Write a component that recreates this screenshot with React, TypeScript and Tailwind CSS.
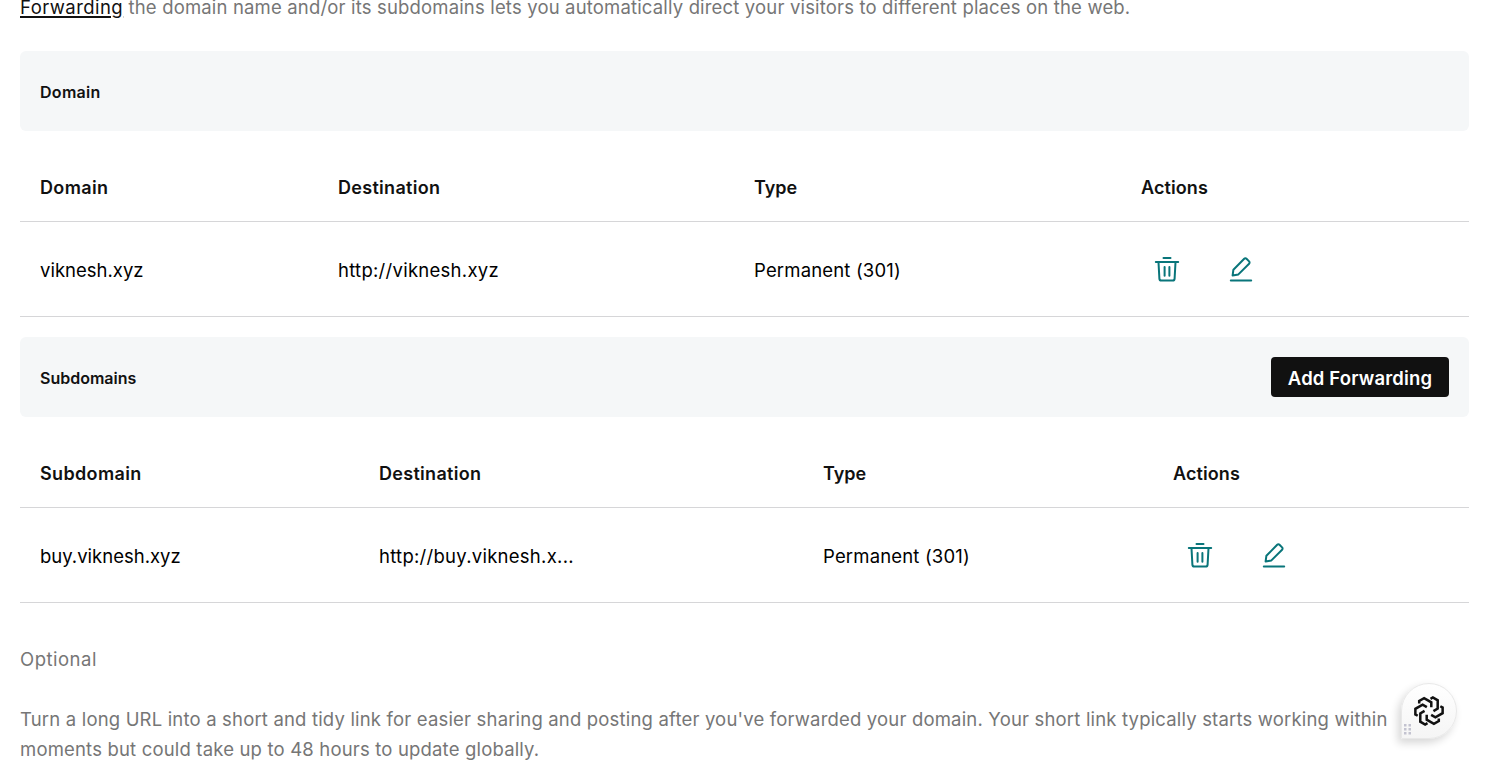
import React from 'react';

type Row = { name: string; destination: string; type: string };

const swirlArms = [0, 60, 120, 180, 240, 300];

function TrashIcon() {
  return (
    <svg viewBox="0 0 26 28" className="h-7 w-[26px]" fill="none" stroke="#09757a" strokeWidth="2" strokeLinecap="round" strokeLinejoin="round">
      <path d="M9.5 3h7M1.8 7h22.4M4.5 7.2l.9 16.4a2 2 0 0 0 2 1.9h11.2a2 2 0 0 0 2-1.9l.9-16.4M10.6 12v8.8M15.4 12v8.8" />
    </svg>
  );
}

function EditIcon() {
  return (
    <svg viewBox="0 0 26 28" className="h-7 w-[26px]" fill="none" stroke="#09757a" strokeWidth="2" strokeLinecap="round" strokeLinejoin="round">
      <path d="M2.8 25.5h20.4M4.6 20.6l.8-5.9L16.2 3.8a1.6 1.6 0 0 1 2.3 0l2.6 2.6a1.6 1.6 0 0 1 0 2.3L10.4 19.4z" />
    </svg>
  );
}

function ForwardingTable({ first, columns, actionsInset, row }: { first: string; columns: string; actionsInset: string; row: Row }) {
  return (
    <div>
      <div className={`grid h-[71px] items-center border-b border-[#d6d6d8] pt-[3px] font-semibold text-[18px] ${columns}`}>
        <span className="tracking-[0.35px]">{first}</span>
        <span className="tracking-[0.3px]">Destination</span>
        <span>Type</span>
        <span className="tracking-[0.1px]">Actions</span>
      </div>
      <div className={`grid h-[95px] items-center border-b border-[#d6d6d8] pt-[3px] text-[18.5px] text-black ${columns}`}>
        <span>{row.name}</span>
        <span className="tracking-[0.27px]">{row.destination}</span>
        <span className="tracking-[0.17px]">{row.type}</span>
        <span className={`-mt-[3px] flex gap-12 ${actionsInset}`}>
          <TrashIcon />
          <EditIcon />
        </span>
      </div>
    </div>
  );
}

export default function App() {
  return (
    <main className="relative h-[782px] w-[1488px] overflow-hidden bg-white px-5 pr-[19px] font-['Inter',sans-serif] text-[#111]">
      <p className="-mt-[8px] h-[59px] whitespace-nowrap text-[18.5px] leading-[30px] tracking-[0.165px] text-[#767676]">
        <a className="tracking-[0.45px] text-[#111] underline decoration-2 underline-offset-2">Forwarding</a> the domain name and/or its subdomains lets you automatically direct your visitors to different places on the web.
      </p>
      <div className="flex h-20 items-center rounded-md bg-[#f5f7f8] px-5 pt-[2px] text-base font-semibold tracking-[0.3px]">Domain</div>
      <div className="h-5" />
      <ForwardingTable
        first="Domain"
        columns="grid-cols-[298px_416px_387px_1fr] pl-5"
        actionsInset="pl-[13px]"
        row={{ name: 'viknesh.xyz', destination: 'http://viknesh.xyz', type: 'Permanent (301)' }}
      />
      <div className="mt-5 flex h-20 items-center justify-between rounded-md bg-[#f5f7f8] px-5 text-base font-semibold">
        <span className="pt-[2px]">Subdomains</span>
        <button className="h-10 w-[178px] rounded bg-[#111] pt-[3px] text-[18.5px] font-semibold tracking-[0.15px] text-white">Add Forwarding</button>
      </div>
      <div className="h-5" />
      <ForwardingTable
        first="Subdomain"
        columns="grid-cols-[339px_444px_350px_1fr] pl-5"
        actionsInset="pl-[14px]"
        row={{ name: 'buy.viknesh.xyz', destination: 'http://buy.viknesh.x...', type: 'Permanent (301)' }}
      />
      <div className="mt-[41px] text-[18.5px] leading-[30px] tracking-[0.175px] text-[#767676]">
        <p className="tracking-[0.5px]">Optional</p>
        <p className="mt-[30px] whitespace-nowrap">
          Turn a long URL into a short and tidy link for easier sharing and posting after you've forwarded your domain. Your short link typically starts working within
          <br />
          moments but could take up to 48 hours to update globally.
        </p>
      </div>
      <div className="absolute left-[1401px] top-[683px] flex h-14 w-14 items-center justify-center rounded-full rounded-bl-none border border-[#e8e8e8] bg-linear-to-b from-white to-[#f5f5f5] shadow-[-3px_4px_8px_rgba(0,0,0,0.16)]">
        <svg viewBox="-15 -15 30 30" className="-ml-px h-[30px] w-[30px]" fill="none" stroke="#111" strokeWidth="2.5">
          {swirlArms.map((angle) => (
            <path key={angle} transform={`rotate(${angle})`} d="M-9.8 -7.4V-10.1L-4.9 -12.9L2.3 -8.7V-3.8" />
          ))}
        </svg>
        <svg viewBox="0 0 8 11" className="absolute bottom-[3px] left-[2px] h-[11px] w-2" fill="#c3c3d0">
          <path d="M0 0h2.5v2.5H0zM4.5 0H7v2.5H4.5zM0 4h2.5v2.5H0zM4.5 4H7v2.5H4.5zM0 8h2.5v2.5H0zM4.5 8H7v2.5H4.5z" />
        </svg>
      </div>
    </main>
  );
}
